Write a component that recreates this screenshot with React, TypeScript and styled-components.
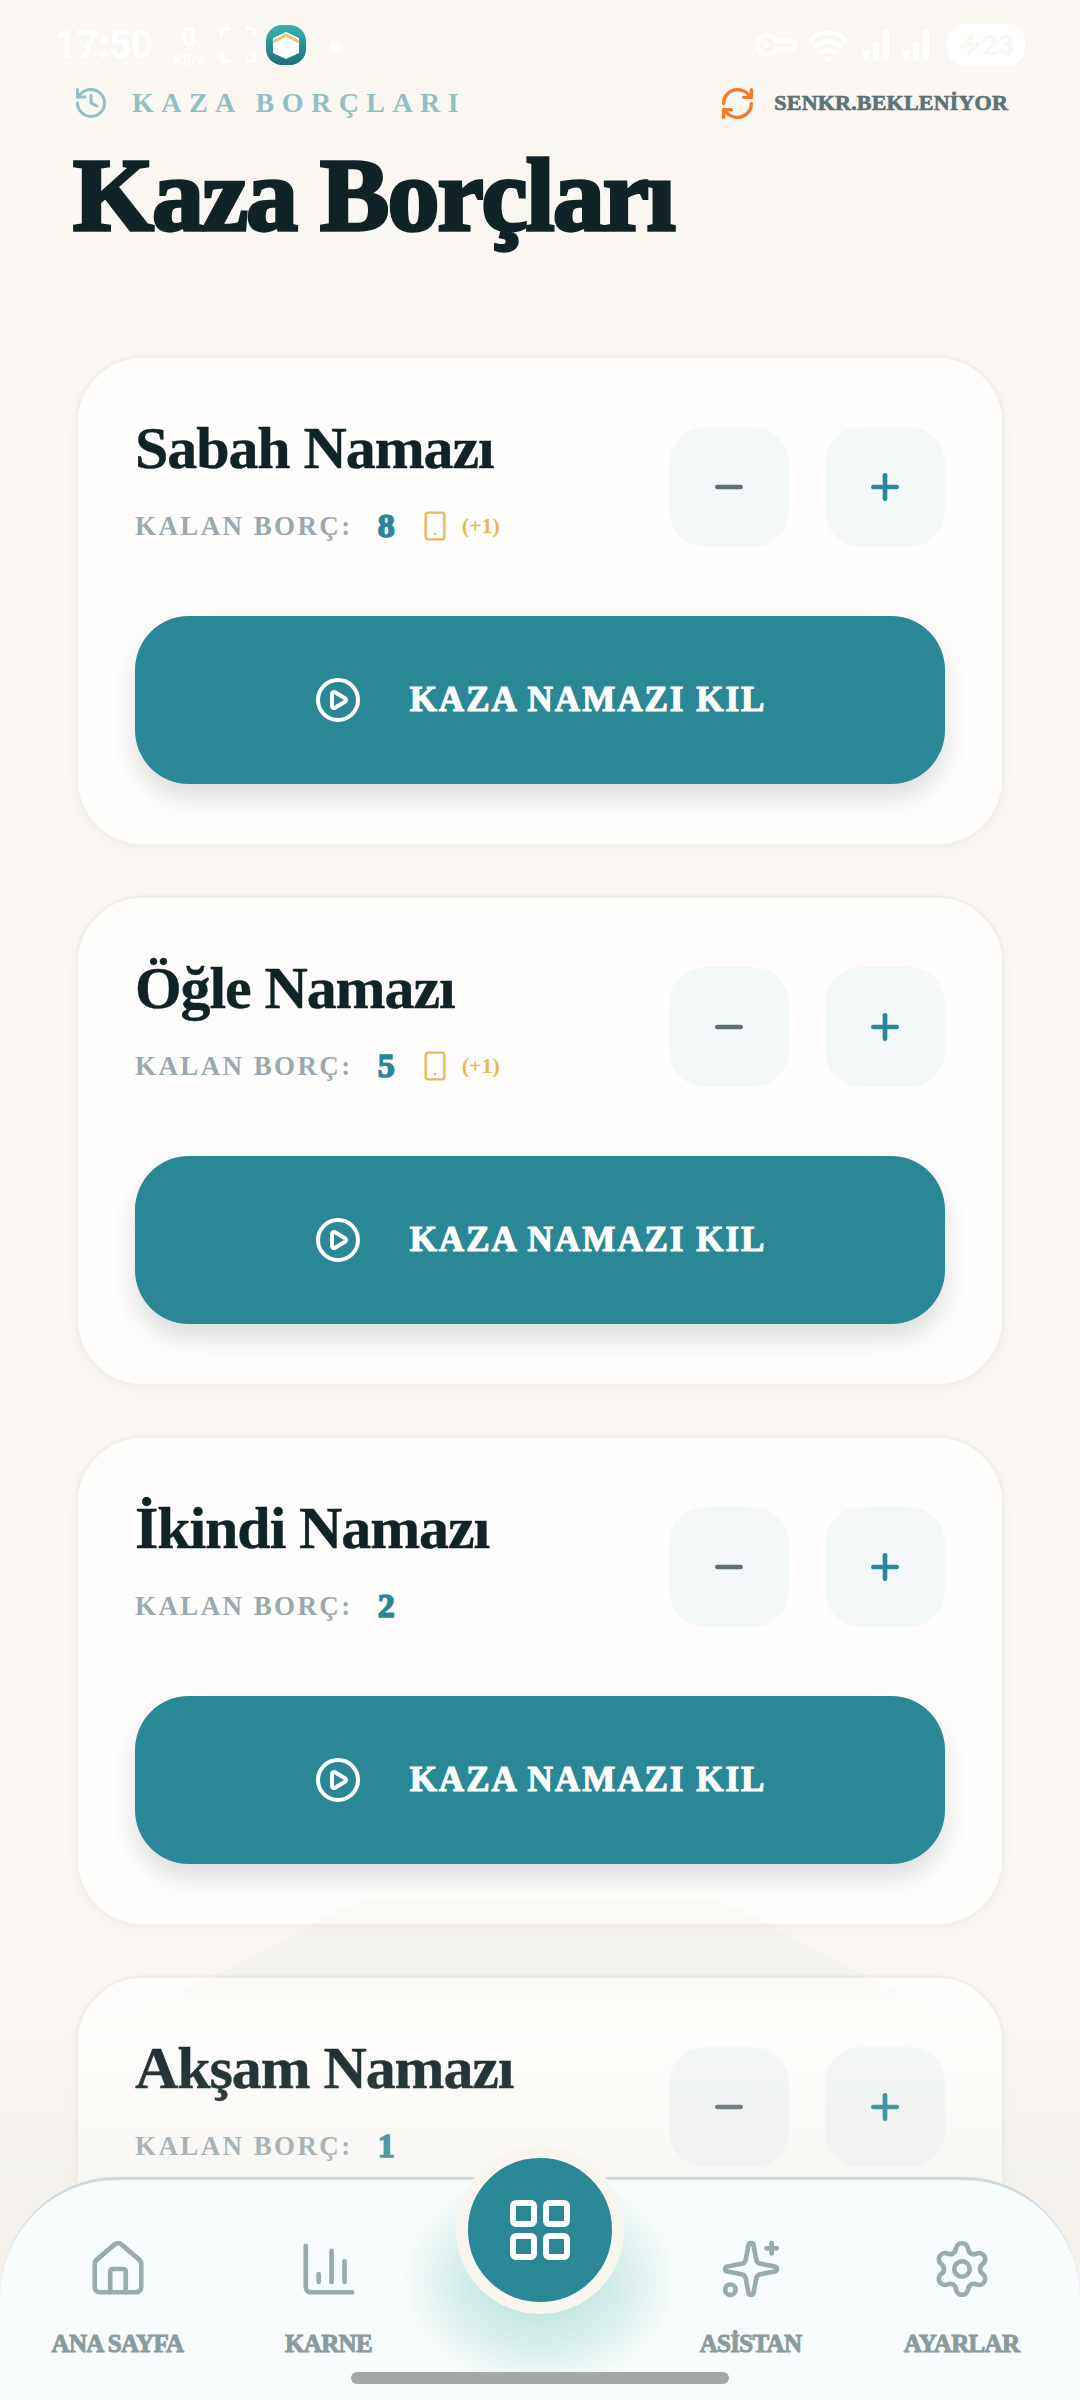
import React from 'react';
import styled, { createGlobalStyle } from 'styled-components';
import {
  ChartColumn,
  CirclePlay,
  History,
  House,
  KeyRound,
  LayoutGrid,
  Minus,
  Plus,
  RefreshCw,
  Scan,
  Settings,
  Smartphone,
  Sparkles,
  Wifi,
  Zap,
} from 'lucide-react';

const SERIF = '"Liberation Serif", "Noto Serif", serif';

const GlobalStyle = createGlobalStyle`
  html, body {
    margin: 0;
    padding: 0;
    background: #faf7f2;
    overflow: hidden;
  }
  * { box-sizing: border-box; }
`;

const Page = styled.div`
  position: relative;
  width: 1080px;
  height: 2400px;
  overflow: hidden;
  background: #faf7f2;
  font-family: ${SERIF};
`;

const StatusBar = styled.div`
  display: flex;
  align-items: center;
  justify-content: space-between;
  height: 80px;
  padding: 10px 55px 0;
  color: #ffffff;
`;

const StatusGroup = styled.div<{ $gap: number }>`
  display: flex;
  align-items: center;
  gap: ${(p) => p.$gap}px;
`;

const Clock = styled.span`
  margin-right: 13px;
  font: 700 38px 'Roboto', sans-serif;
`;

const Speed = styled.span`
  display: flex;
  flex-direction: column;
  align-items: center;
  width: 34px;
  font: 700 26px/30px 'Roboto', sans-serif;
  small {
    font-size: 14px;
    line-height: 16px;
  }
`;

const ScreenshotIcon = styled(Scan)`
  margin-left: 4px;
`;

const StatusDot = styled.span`
  width: 11px;
  height: 11px;
  margin-left: 18px;
  border-radius: 50%;
  background: #ffffff;
`;

const SideKey = styled(KeyRound)`
  transform: rotate(-135deg);
`;

const Bars = styled.span`
  display: flex;
  align-items: flex-end;
  gap: 4px;
  height: 30px;
`;

const Bar = styled.span<{ $h: number }>`
  width: 6px;
  height: ${(p) => p.$h}px;
  background: #ffffff;
`;

const Battery = styled.span`
  display: flex;
  align-items: center;
  justify-content: center;
  width: 78px;
  height: 42px;
  margin-left: 4px;
  border-radius: 18px;
  background: #ffffff;
  color: #faf7f2;
  font: 700 28px 'Roboto', sans-serif;
`;

const Header = styled.header`
  padding: 0 72px 0 73px;
`;

const TopRow = styled.div`
  display: flex;
  align-items: center;
  justify-content: space-between;
  height: 46px;
`;

const Section = styled.div`
  display: flex;
  align-items: center;
  gap: 23px;
  color: #93bfc4;
  font-size: 28px;
  font-weight: 700;
  letter-spacing: 7.45px;
`;

const Sync = styled.div`
  display: flex;
  align-items: center;
  gap: 18px;
  color: #5d7275;
  font-size: 22px;
  font-weight: 700;
  letter-spacing: 0.2px;
  -webkit-text-stroke: 0.7px #5d7275;
`;

const Title = styled.h1`
  margin: 9px 0 45px;
  height: 127px;
  color: #112326;
  font-size: 104px;
  line-height: 120px;
  font-weight: 700;
  letter-spacing: -2px;
  -webkit-text-stroke: 3.4px #112326;
`;

const CardList = styled.main`
  display: flex;
  flex-direction: column;
  gap: 48px;
  padding: 48px 75px 0;
`;

const Card = styled.section`
  flex: none;
  height: 492px;
  padding: 62px 60px;
  border: 3px solid #f1efe9;
  border-radius: 68px;
  background: #fffdfb;
  box-shadow: 0 4px 14px rgba(60, 60, 40, 0.03);
`;

const CardTop = styled.div`
  display: flex;
  justify-content: space-between;
  margin: 7px -3px 0;
  height: 120px;
`;

const PrayerName = styled.h2`
  margin: -12px 0 0;
  color: #112326;
  font-size: 60px;
  line-height: 66px;
  font-weight: 700;
  letter-spacing: -1.1px;
  -webkit-text-stroke: 0.4px #112326;
`;

const Debt = styled.div`
  display: flex;
  align-items: center;
  margin-top: 27px;
  height: 36px;
`;

const DebtLabel = styled.span`
  color: #9aa9ad;
  font-size: 27px;
  font-weight: 700;
  letter-spacing: 2.4px;
`;

const DebtCount = styled.span`
  margin-left: 25px;
  color: #2a8796;
  font-size: 34px;
  font-weight: 700;
  -webkit-text-stroke: 1.6px #2a8796;
`;

const Pending = styled.span`
  display: flex;
  align-items: center;
  gap: 11px;
  margin-left: 24px;
  color: #e6b856;
  font-size: 22px;
  font-weight: 700;
`;

const Steppers = styled.div`
  display: flex;
  gap: 36px;
`;

const Stepper = styled.button<{ $accent?: boolean }>`
  display: flex;
  align-items: center;
  justify-content: center;
  width: 120px;
  height: 120px;
  padding: 0;
  border: 0;
  border-radius: 36px;
  background: #f4f7f7;
  color: ${(p) => (p.$accent ? '#2a8796' : '#5d7275')};
`;

const PrayButton = styled.button`
  display: flex;
  align-items: center;
  justify-content: center;
  gap: 48px;
  width: 810px;
  height: 168px;
  margin: 69px -3px 0;
  padding: 0;
  border: 0;
  border-radius: 54px;
  background: #2a8796;
  box-shadow: 0 14px 26px rgba(30, 60, 70, 0.16);
  color: #ffffff;
  font-family: ${SERIF};
  font-size: 35px;
  font-weight: 700;
  letter-spacing: 2px;
  -webkit-text-stroke: 1.2px #ffffff;
`;

/* lies over the list: soft light cone and the fade behind the nav */
const Cone = styled.div`
  position: absolute;
  left: 0;
  top: 1900px;
  width: 1080px;
  height: 300px;
  background: rgba(60, 80, 50, 0.024);
  clip-path: polygon(33.3% 0, 66.7% 0, 100% 62%, 100% 100%, 0 100%, 0 62%);
  mask-image: linear-gradient(to bottom, #000 26%, transparent 42%);
  pointer-events: none;
`;

const Fade = styled.div`
  position: absolute;
  left: 0;
  right: 0;
  top: 2000px;
  bottom: 0;
  background: linear-gradient(to bottom, rgba(225, 225, 220, 0), rgba(225, 225, 220, 0.24) 180px);
  pointer-events: none;
`;

const BottomNav = styled.nav`
  position: absolute;
  left: 0;
  right: 0;
  bottom: 0;
  height: 223px;
  display: grid;
  grid-template-columns: repeat(5, 211px);
  padding: 0 0 0 12px;
  border-top: 3px solid #cddcdd;
  border-radius: 116px 116px 0 0 / 120px 120px 0 0;
  background: #f8fbfb;
`;

const NavItem = styled.div`
  display: flex;
  flex-direction: column;
  align-items: center;
  padding-top: 58px;
  color: #9aabad;
`;

const NavLabel = styled.span`
  margin-top: 30px;
  color: #8a9b9d;
  font-size: 25px;
  line-height: 28px;
  font-weight: 700;
  letter-spacing: -0.7px;
  white-space: nowrap;
  -webkit-text-stroke: 1px #8a9b9d;
`;

const Glow = styled.div`
  position: absolute;
  left: 400px;
  top: 2170px;
  width: 280px;
  height: 220px;
  background: radial-gradient(closest-side, rgba(150, 215, 205, 0.8), rgba(150, 215, 205, 0));
  pointer-events: none;
`;

const Fab = styled.button`
  position: absolute;
  left: 456px;
  top: 2146px;
  display: flex;
  align-items: center;
  justify-content: center;
  width: 168px;
  height: 168px;
  padding: 0;
  border: 12px solid #f8f5ee;
  border-radius: 50%;
  background: #2a8796;
  color: #ffffff;
`;

const HomeIndicator = styled.div`
  position: absolute;
  left: 351px;
  top: 2372px;
  width: 378px;
  height: 12px;
  border-radius: 6px;
  background: #a4a8a8;
`;

const AppIcon = () => (
  <svg width="40" height="40" viewBox="0 0 40 40">
    <defs>
      <linearGradient id="appIconFill" x1="0" y1="0" x2="0" y2="1">
        <stop offset="0" stopColor="#35b5ad" />
        <stop offset="1" stopColor="#1f6f78" />
      </linearGradient>
    </defs>
    <rect width="40" height="40" rx="16" fill="url(#appIconFill)" />
    <path d="M20 7 33 13V28L20 34 7 28V13Z" fill="#fff" />
    <path d="M7 17 20 10 33 17" fill="none" stroke="#e3c77e" strokeWidth="3" />
  </svg>
);

const prayers = [
  { name: 'Sabah Namazı', count: 8, pending: true },
  { name: 'Öğle Namazı', count: 5, pending: true },
  { name: 'İkindi Namazı', count: 2, pending: false },
  { name: 'Akşam Namazı', count: 1, pending: false },
];

const navLeft = [
  { label: 'ANA SAYFA', Icon: House },
  { label: 'KARNE', Icon: ChartColumn },
];

const navRight = [
  { label: 'ASİSTAN', Icon: Sparkles },
  { label: 'AYARLAR', Icon: Settings },
];

export default function App() {
  return (
    <Page>
      <GlobalStyle />
      <StatusBar>
        <StatusGroup $gap={6}>
          <Clock>17:50</Clock>
          <Speed>
            0<small>KB/s</small>
          </Speed>
          <ScreenshotIcon size={44} strokeWidth={2} />
          <AppIcon />
          <StatusDot />
        </StatusGroup>
        <StatusGroup $gap={14}>
          <SideKey size={36} strokeWidth={3} />
          <Wifi size={42} strokeWidth={2.5} />
          <Bars>
            <Bar $h={10} />
            <Bar $h={18} />
            <Bar $h={30} />
          </Bars>
          <Bars>
            <Bar $h={10} />
            <Bar $h={18} />
            <Bar $h={30} />
          </Bars>
          <Battery>
            <Zap size={24} fill="#faf7f2" />
            23
          </Battery>
        </StatusGroup>
      </StatusBar>

      <Header>
        <TopRow>
          <Section>
            <History size={36} strokeWidth={2} />
            KAZA BORÇLARI
          </Section>
          <Sync>
            <RefreshCw size={37} color="#f47a2b" strokeWidth={2.2} />
            SENKR.BEKLENİYOR
          </Sync>
        </TopRow>
        <Title>Kaza Borçları</Title>
      </Header>

      <CardList>
        {prayers.map((p) => (
          <Card key={p.name}>
            <CardTop>
              <div>
                <PrayerName>{p.name}</PrayerName>
                <Debt>
                  <DebtLabel>KALAN BORÇ:</DebtLabel>
                  <DebtCount>{p.count}</DebtCount>
                  {p.pending && (
                    <Pending>
                      <Smartphone size={32} strokeWidth={1.8} />
                      (+1)
                    </Pending>
                  )}
                </Debt>
              </div>
              <Steppers>
                <Stepper aria-label="azalt">
                  <Minus size={40} strokeWidth={2.8} />
                </Stepper>
                <Stepper $accent aria-label="artır">
                  <Plus size={40} strokeWidth={2.8} />
                </Stepper>
              </Steppers>
            </CardTop>
            <PrayButton>
              <CirclePlay size={48} strokeWidth={2} />
              KAZA NAMAZI KIL
            </PrayButton>
          </Card>
        ))}
      </CardList>

      <Cone />
      <Fade />

      <BottomNav>
        {navLeft.map(({ label, Icon }) => (
          <NavItem key={label}>
            <Icon size={62} strokeWidth={1.8} />
            <NavLabel>{label}</NavLabel>
          </NavItem>
        ))}
        <div />
        {navRight.map(({ label, Icon }) => (
          <NavItem key={label}>
            <Icon size={62} strokeWidth={1.8} />
            <NavLabel>{label}</NavLabel>
          </NavItem>
        ))}
      </BottomNav>
      <Glow />
      <Fab aria-label="menü">
        <LayoutGrid size={72} strokeWidth={2} />
      </Fab>
      <HomeIndicator />
    </Page>
  );
}
